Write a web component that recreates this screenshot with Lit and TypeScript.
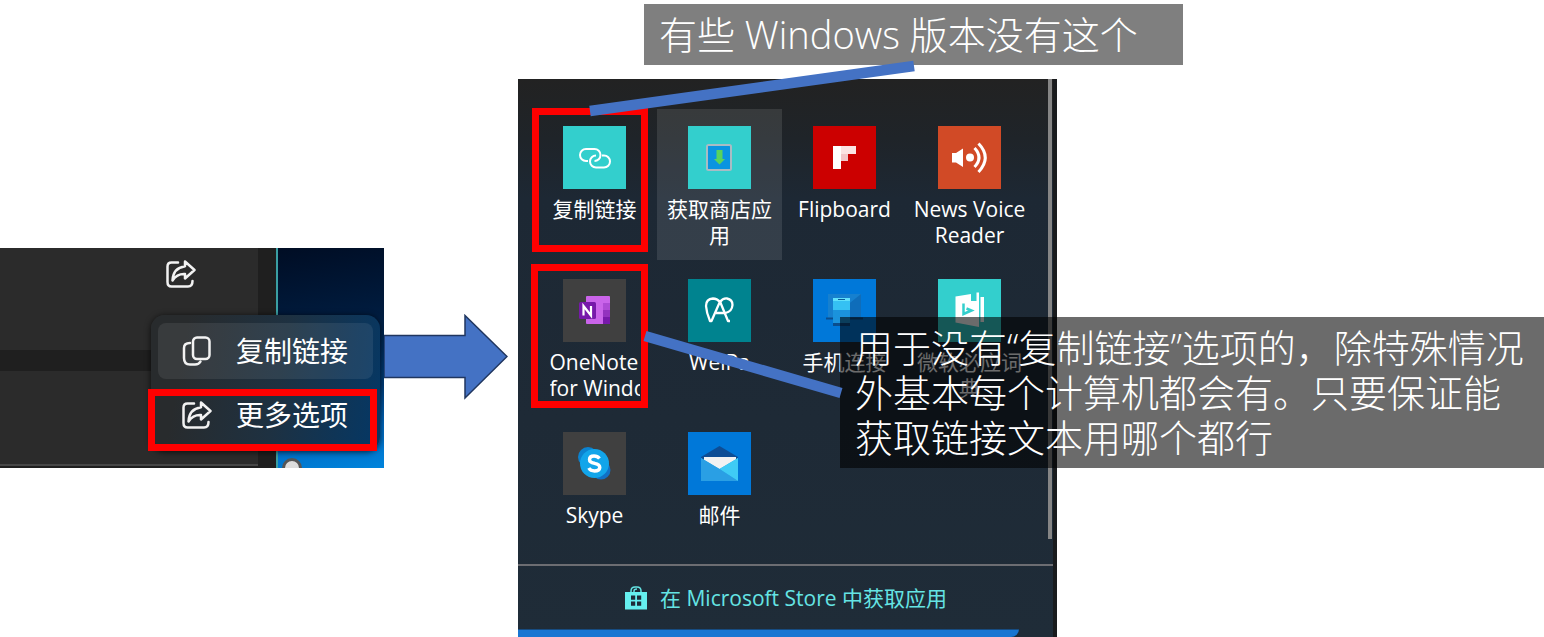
import { LitElement, html, css, svg, TemplateResult } from "lit";
import { customElement } from "lit/decorators.js";

const shareIcon = html`<svg class="glyph" viewBox="0 0 30 28" width="30" height="28" aria-hidden="true">
  <path d="M12 2.5H5.5Q1.5 2.5 1.5 6.500V22Q1.500 26.500 5.500 26.500H22Q26.500 26.500 26.500 21" />
  <path d="M19 1.500 28.500 10 19 18.500V14Q11 13.500 6.500 20.500Q7 8 19 6.200Z" />
</svg>`;

const copyIcon = html`<svg class="glyph" viewBox="0 0 30 30" width="30" height="30" aria-hidden="true">
  <rect x="11" y="1.500" width="16.500" height="21.500" rx="4" />
  <path d="M8 7Q2 7 2 12V22Q2 28.500 8 28.500H13Q17 28.500 18.500 25.500" />
</svg>`;

interface App {
  name: string;
  tile: string;
  art: TemplateResult;
  state?: string;
  lines?: string[];
}

const apps: App[] = [
  {
    name: "复制链接",
    tile: "aqua",
    art: svg`<g fill="none" stroke="#fff" stroke-width="2">
      <path d="M25 35H23A6 6 0 0 1 23 23H31.500A6 6 0 0 1 31.500 35" />
      <path d="M39 29.500H41A6 6 0 0 1 41 41.500H33A6 6 0 0 1 33 29.500" />
    </g>`,
  },
  {
    name: "获取商店应用",
    tile: "aqua",
    state: "hover",
    art: svg`<rect x="19" y="19" width="24" height="25" rx="1.500" fill="#0a94e0" stroke="#a9bcc4" stroke-width="2" />
      <path d="M28.500 24H34.500V33H37L31.500 38.500 26 33H28.500Z" fill="#58d35c" />`,
  },
  {
    name: "Flipboard",
    tile: "red",
    art: svg`<path d="M20 20H28V43H20Z" fill="#fff" /><path d="M28 20H43V28H28Z" fill="#fbe3e3" />
      <path d="M28 28H35V35H28Z" fill="#f2c6c9" />`,
  },
  {
    name: "News Voice Reader",
    tile: "orange",
    art: svg`<path d="M14 27H18L25 22.500V41L18 36.500H14Z" fill="#fff" /><circle cx="32" cy="31.500" r="4" fill="#fff" />
      <g fill="none" stroke="#fff" stroke-width="3"><path d="M36.500 22Q45.500 31.500 36.500 41" /><path d="M40.500 17.500Q54 31.500 40.500 46" /></g>`,
  },
  {
    name: "OneNote for Windows 10",
    tile: "gray",
    lines: ["OneNote", "for Windows 10"],
    art: svg`<rect x="23" y="17" width="24" height="28" rx="1" fill="#ca64ea" />
      <path d="M40 24H47V31H40Z" fill="#ae4bd5" /><path d="M40 31H47V38H40Z" fill="#9332bf" /><path d="M40 38H47V45H40Z" fill="#7719aa" />
      <rect x="16" y="23" width="17" height="17" rx="1.500" fill="#7719aa" />
      <path d="M20.500 36.500V27L28 36.500V27" fill="none" stroke="#fff" stroke-width="2.200" />`,
  },
  {
    name: "WeiPa",
    tile: "teal",
    art: svg`<g fill="none" stroke="#fff" stroke-width="2.300" stroke-linejoin="round">
      <path d="M32 23Q29 19.500 25 19.500Q18 20 18 27Q18.500 34 22 42H23.500L32 22.500 40 42H42" />
      <path d="M32 23Q35 19 39 19.500Q44.500 20.500 44.500 26Q44 32.500 37.500 34H28" />
    </g>`,
  },
  {
    name: "手机连接",
    tile: "blue",
    art: svg`<rect x="15" y="15" width="33" height="24" fill="#1680cf" /><path d="M33 27 48 15V39H36Z" fill="#0f6dba" />
      <path d="M13 38.500H50V40.500H13Z" fill="#0a4d8d" /><rect x="20" y="19" width="17" height="25" fill="#35c1f3" />
      <path d="M20 19H37V22H20Z" fill="#5fe0fb" /><path d="M20 31H37V44H20Z" fill="#1b93dc" />
      <path d="M25 20.500H32" stroke="#0a5b94" stroke-width="1" /><path d="M20 44H37V47H20Z" fill="#0a4d8d" />`,
  },
  {
    name: "微软必应词典",
    tile: "aqua",
    art: svg`<path d="M17.500 17.500 33 15V22H38.500V13.500H41V48L17.500 43.500Z" fill="#fff" /><path d="M42.500 18H46V43H42.500Z" fill="#fff" />
      <path d="M25.500 24.500V35L33.500 31.500 28.500 29.500" fill="none" stroke="#33cfcd" stroke-width="2.500" />`,
  },
  {
    name: "Skype",
    tile: "gray",
    art: svg`<circle cx="25" cy="25" r="10" fill="#0b82cf" /><circle cx="38" cy="38" r="9.500" fill="#1170c5" />
      <circle cx="31.500" cy="31.500" r="14.500" fill="#12a5ea" />
      <path d="M36.500 26.500Q34.500 24 31 24Q26.500 24 26.500 27.500Q26.500 30.500 31.500 31.300Q36.800 32.300 36.800 35.500Q36.500 39 31.500 39Q27.500 39 25.800 36" fill="none" stroke="#fff" stroke-width="3.400" />`,
  },
  {
    name: "邮件",
    tile: "blue",
    art: svg`<path d="M13 25 31.500 14 50 25V28H13Z" fill="#0d4d95" /><path d="M16 25H48V40H16Z" fill="#f2f2f2" />
      <path d="M13 26 31.500 37 50 26V49H13Z" fill="#25b0ec" /><path d="M31.500 37 50 26V49Z" fill="#3fcbf5" />
      <path d="M31.500 37 50 49H13V26Z" fill="#2a9fe4" />`,
  },
];

@customElement("app-root")
export class AppRoot extends LitElement {
  static styles = css`
    :host {
      display: block;
      font-family: "Open Sans", "Noto Sans CJK SC", sans-serif;
      color: #fff;
      background: #fff;
    }
    * { box-sizing: border-box; }
    button, a { font: inherit; color: inherit; text-decoration: none; }
    button { border: 0; padding: 0; background: none; }
    .stage {
      position: relative;
      display: flex;
      align-items: center;
      min-height: 100vh;
      padding-top: 79px;
      overflow: hidden;
    }

    .desktop {
      position: relative;
      flex: none;
      display: flex;
      width: 384px;
      height: 220px;
      overflow: hidden;
    }
    .window {
      flex: none;
      width: 278px;
      padding-right: 18px;
      display: flex;
      flex-direction: column;
      gap: 21px;
      background: #1f1f1f;
      border-right: 2px solid #3a9fa3;
    }
    .pane { background: #2b2b2b; height: 102px; padding: 12px 62px 0 0; text-align: right; }
    .pane.next { height: 95px; border-bottom: 2px solid #474747; }
    .wallpaper { flex: 1; background: linear-gradient(170deg, #000d24 0%, #001c3f 35%, #003c78 65%, #006ac2 82%, #0084dc 100%); }
    .glyph { display: inline-block; flex: none; fill: none; stroke: #f2f2f2; stroke-width: 2.500; stroke-linejoin: round; stroke-linecap: round; }
    .menu {
      position: absolute;
      left: 151px;
      top: 67px;
      width: 229px;
      padding: 8px 7px;
      border-radius: 14px;
      background: linear-gradient(100deg, #282b2d 15%, #1e3141 55%, #073762 95%);
      box-shadow: 0 1px 6px #000b;
    }
    .choice {
      display: flex;
      align-items: center;
      gap: 24px;
      width: 100%;
      height: 56px;
      padding-left: 24px;
      border-radius: 8px;
      font-size: 28px;
      line-height: 56px;
    }
    .choice.hover { background: #ffffff14; margin-bottom: 8px; }
    .knob { position: absolute; left: 282px; bottom: -10px; width: 20px; height: 20px; border-radius: 50%; background: #ddd; border: 3px solid #555; }

    .arrow { flex: none; margin-right: 10px; }

    .share {
      flex: none;
      width: 539px;
      min-height: 558px;
      display: flex;
      flex-direction: column;
      background: linear-gradient(#222 0, #1f2429 60px, #1d2834 120px, #1f2c38 100%);
      border-right: 4px solid #191b1d;
    }
    .list {
      flex: 1;
      margin-right: 1px;
      border-right: 4px solid #858585;
      padding: 30px 14px 0;
      display: grid;
      grid-template-columns: repeat(4, 125px);
      grid-template-rows: 151px 151px 124px;
      gap: 2px 0;
      align-content: start;
      margin-bottom: 25px;
    }
    .app { display: flex; flex-direction: column; align-items: center; padding: 17px 5px 0; gap: 7px; font-size: 21px; line-height: 26px; }
    .app.hover { background: #ffffff1b; }
    .tile { display: block; flex: none; width: 63px; height: 63px; }
    .aqua { background: #33cfcd; }
    .red { background: #c00; }
    .orange { background: #d14a26; }
    .gray { background: #404040; }
    .teal { background: #00838f; }
    .blue { background: #0078d9; }
    .clipped { width: 90px; overflow: hidden; white-space: nowrap; text-align: left; }
    .line { display: block; }
    .store {
      flex: none;
      height: 65px;
      border-top: 2px solid #6c6d72;
      display: flex;
      align-items: center;
      justify-content: center;
      gap: 12px;
      color: #65e4e4;
      font-size: 21px;
      line-height: 26px;
    }
    .taskbar { flex: none; height: 8px; margin-right: 34px; border-radius: 0 0 12px 0; background: #1976d2; border-top: 1px solid #164c82; }

    .mark { position: absolute; border: 7px solid #f00; pointer-events: none; }
    .mark-more { left: 148px; top: 389px; width: 229px; height: 62px; }
    .mark-copy { left: 532px; top: 108px; width: 116px; height: 144px; }
    .mark-note { left: 531px; top: 264px; width: 117px; height: 144px; }
    .links { position: absolute; left: 0; top: 0; pointer-events: none; }
    .note { position: absolute; margin: 0; padding: 8px 15px; font-size: 38px; font-weight: 300; line-height: 45px; white-space: nowrap; }
    .note-top { left: 644px; top: 4px; width: 539px; background: #00000080; }
    .note-side { left: 840px; right: 0; top: 317px; background: #00000094; }
  `;

  private renderApp(app: App) {
    return html`<button class="app ${app.state ?? ""}" type="button">
      <svg class="tile ${app.tile}" viewBox="0 0 63 63" aria-hidden="true">${app.art}</svg>
      ${app.lines
        ? html`<span class="clipped">${app.lines.map((line) => html`<span class="line">${line}</span>`)}</span>`
        : html`<span>${app.name}</span>`}
    </button>`;
  }

  render() {
    return html`<main class="stage">
      <section class="desktop">
        <div class="window">
          <div class="pane">${shareIcon}</div>
          <div class="pane next"></div>
        </div>
        <div class="wallpaper"></div>
        <span class="knob"></span>
        <div class="menu">
          <button class="choice hover" type="button">${copyIcon}<span>复制链接</span></button>
          <button class="choice" type="button">${shareIcon}<span>更多选项</span></button>
        </div>
      </section>

      <svg class="arrow" width="124" height="88" viewBox="0 0 124 88" aria-hidden="true">
        <path d="M0 21.500H81V1.500L123 42.500 81 84V63.500H0Z" fill="#4472c4" stroke="#20365f" stroke-width="1.500" />
      </svg>

      <section class="share">
        <div class="list">${apps.map((app) => this.renderApp(app))}</div>
        <a class="store" href="#store">
          <svg width="24" height="24" viewBox="0 0 24 24" aria-hidden="true">
            <path d="M7 7V5Q7 1 11 1H13Q17 1 17 5V7M10 7V5Q10 3 13 3" fill="none" stroke="#65e4e4" stroke-width="1.500" />
            <path d="M1 6H23V23.500H1Z" fill="#65efef" />
            <path d="M7 9.500H11.200V13.700H7ZM13 9.500H17.200V13.700H13ZM7 15.500H11.200V19.700H7ZM13 15.500H17.200V19.700H13Z" fill="#1e2b38" />
          </svg>
          <span>在 Microsoft Store 中获取应用</span>
        </a>
        <div class="taskbar"></div>
      </section>

      <div class="mark mark-more"></div>
      <div class="mark mark-copy"></div>
      <div class="mark mark-note"></div>
      <p class="note note-top">有些 Windows 版本没有这个</p>
      <p class="note note-side">用于没有“复制链接”选项的，除特殊情况<br />外基本每个计算机都会有。只要保证能<br />获取链接文本用哪个都行</p>
      <svg class="links" width="1057" height="637" viewBox="0 0 1057 637" aria-hidden="true">
        <path d="M590 111 914 66M645 336 841 393" fill="none" stroke="#4472c4" stroke-width="10.500" />
      </svg>
    </main>`;
  }
}
